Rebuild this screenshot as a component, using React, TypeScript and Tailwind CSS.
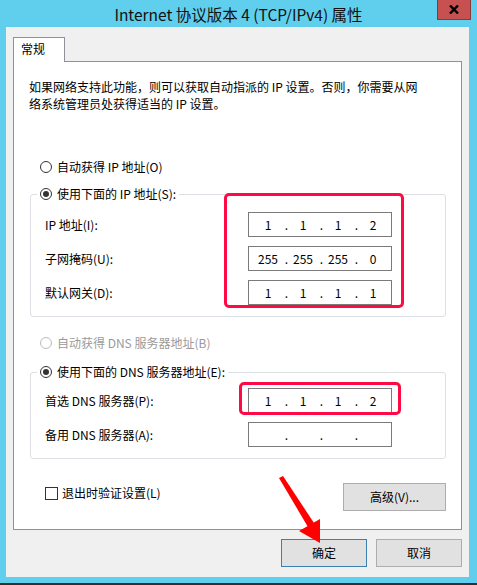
import { Fragment, ReactNode } from "react"

const font = { fontFamily: '"Noto Sans CJK SC", "Noto Sans", sans-serif' }

function Radio({ checked, disabled, children }: { checked?: boolean; disabled?: boolean; children: ReactNode }) {
  return (
    <div className={`flex h-[20px] items-center gap-[5px] ${disabled ? "text-[#9a9a9a]" : "text-black"}`}>
      <span
        className={`flex h-[12px] w-[12px] items-center justify-center rounded-full border bg-white ${
          disabled ? "border-[#bcbcbc]" : "border-[#333]"
        }`}
      >
        {checked && <span className="h-[6px] w-[6px] rounded-full bg-[#333]" />}
      </span>
      <span className="leading-[20px]">{children}</span>
    </div>
  )
}

function IpField({ parts }: { parts: string[] }) {
  return (
    <div className="flex h-[25px] w-[144px] items-center border border-[#7a7a7a] bg-white pl-[4px] leading-[23px]">
      {parts.map((p, i) => (
        <Fragment key={i}>
          <span className="w-[30px] text-center">{p}</span>
          {i < 3 && <span className="w-[5px] text-right">.</span>}
        </Fragment>
      ))}
    </div>
  )
}

function Label({ children }: { children: ReactNode }) {
  return <div className="flex h-[25px] items-center">{children}</div>
}

function Button({ children, primary, className }: { children: ReactNode; primary?: boolean; className?: string }) {
  return (
    <div
      className={`flex h-[28px] items-center justify-center border bg-[#e1e1e1] ${
        primary ? "border-[#3c7fb1]" : "border-[#adadad]"
      } ${className ?? ""}`}
    >
      {children}
    </div>
  )
}

export default function App() {
  return (
    <div className="relative flex h-[585px] w-[477px] flex-col bg-[#5fcfed] text-[12px] text-black" style={font}>
      {/* title bar */}
      <div className="relative flex h-[27px] items-center justify-center">
        <span className="text-[15.5px] leading-[20px] text-[#111]">Internet 协议版本 4 (TCP/IPv4) 属性</span>
        <div className="absolute right-[6px] top-0 flex h-[20px] w-[34px] items-center justify-center border border-t-0 border-[#8a3a3a] bg-[#c75050]">
          <svg width="10" height="9" viewBox="0 0 10 9">
            <path d="M1 0.5 L9 8.5 M9 0.5 L1 8.5" stroke="#000" strokeWidth="2.4" />
          </svg>
        </div>
      </div>

      {/* client */}
      <div className="ml-[6px] flex h-[550px] w-[463px] flex-col bg-[#f0f0f0] pl-[7px] pt-[10px]">
        <div className="relative z-10 -mb-[1px] h-[25px] w-[52px] border border-b-0 border-[#8e9199] bg-white pl-[7px] pt-[2px] leading-[17px]">
          常规
        </div>

        <div className="flex h-[469px] w-[449px] flex-col border border-[#8e9199] bg-white px-[15px] pt-[16px]">
          <p className="leading-[17px]">
            如果网络支持此功能，则可以获取自动指派的 IP 设置。否则，你需要从网
            <br />
            络系统管理员处获得适当的 IP 设置。
          </p>

          <div className="ml-[11px] mt-[45px]">
            <Radio>自动获得 IP 地址(O)</Radio>
          </div>

          <fieldset className="ml-[1px] mt-[7px] rounded-[3px] border border-[#dcdfe3] px-[6px] pb-[11px] pt-[8px]">
            <legend className="bg-white px-[3px]">
              <Radio checked>使用下面的 IP 地址(S):</Radio>
            </legend>
            <div className="flex pl-[8px]">
              <div className="flex w-[203px] flex-col gap-[9px]">
                <Label>IP 地址(I):</Label>
                <Label>子网掩码(U):</Label>
                <Label>默认网关(D):</Label>
              </div>
              <div className="relative flex flex-col gap-[9px]">
                <IpField parts={["1", "1", "1", "2"]} />
                <IpField parts={["255", "255", "255", "0"]} />
                <IpField parts={["1", "1", "1", "1"]} />
                <div className="absolute -bottom-[3px] -left-[24px] -right-[12px] -top-[19px] rounded-[5px] border-[3px] border-[#ff0a45]" />
              </div>
            </div>
          </fieldset>

          <div className="ml-[11px] mt-[16px]">
            <Radio disabled>自动获得 DNS 服务器地址(B)</Radio>
          </div>

          <fieldset className="ml-[1px] mt-[9px] rounded-[3px] border border-[#dcdfe3] px-[6px] pb-[11px] pt-[6px]">
            <legend className="bg-white px-[3px]">
              <Radio checked>使用下面的 DNS 服务器地址(E):</Radio>
            </legend>
            <div className="flex pl-[8px]">
              <div className="flex w-[203px] flex-col gap-[9px]">
                <Label>首选 DNS 服务器(P):</Label>
                <Label>备用 DNS 服务器(A):</Label>
              </div>
              <div className="flex flex-col gap-[9px]">
                <div className="relative">
                  <IpField parts={["1", "1", "1", "2"]} />
                  <div className="absolute -bottom-[2px] -left-[9px] -right-[9px] -top-[6px] rounded-[5px] border-[3px] border-[#ff0a45]" />
                </div>
                <IpField parts={["", "", "", ""]} />
              </div>
            </div>
          </fieldset>

          <div className="mt-[24px] flex items-start justify-between">
            <div className="ml-[16px] mt-[1px] flex h-[18px] items-center gap-[4px]">
              <span className="h-[13px] w-[13px] border border-[#333] bg-white" />
              <span>退出时验证设置(L)</span>
            </div>
            <Button className="w-[103px]">高级(V)...</Button>
          </div>
        </div>

        <div className="mt-[9px] flex justify-end gap-[9px] pr-[7px]">
          <Button primary className="w-[86px]">确定</Button>
          <Button className="w-[86px]">取消</Button>
        </div>
      </div>

      <div className="mt-auto h-[2px] bg-[#2f2f2f]" />

      {/* annotation arrow */}
      <svg className="absolute left-0 top-0" width="477" height="585" viewBox="0 0 477 585">
        <polygon points="279,478 283,476 314,523 308,527" fill="#ff0000" />
        <polygon points="299,531 320,519 320,543" fill="#ff0000" />
      </svg>
    </div>
  )
}
